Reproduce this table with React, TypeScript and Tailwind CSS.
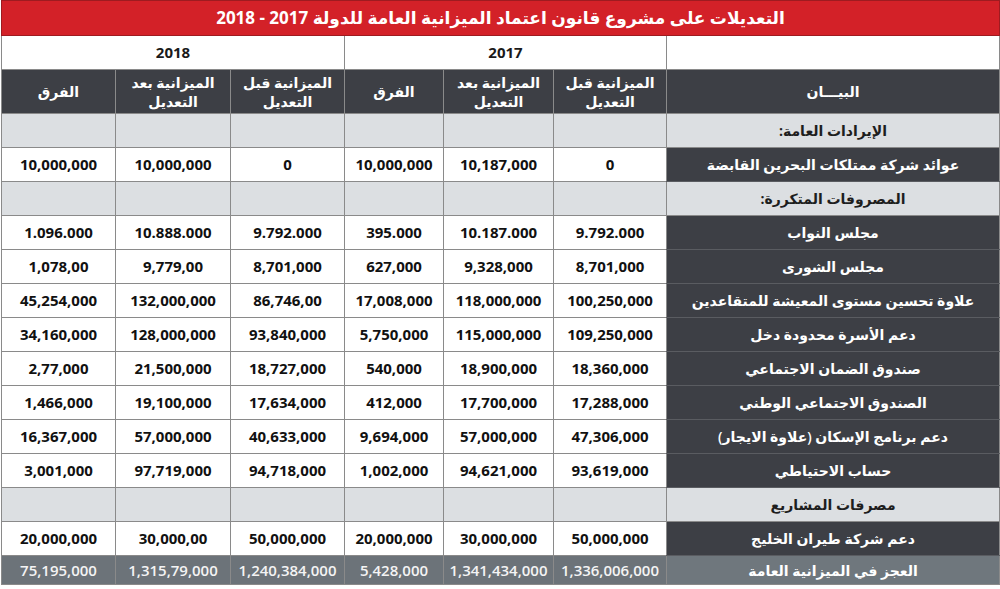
const font = "[font-family:'Open_Sans','DejaVu_Sans',sans-serif]";

type Row =
  | { kind: "section"; label: string }
  | { kind: "data"; label: string; values: string[] }
  | { kind: "total"; label: string; values: string[] };

// values in reading order (right to left): 2017 before, after, diff, 2018 before, after, diff
const rows: Row[] = [
  { kind: "section", label: "الإيرادات العامة:" },
  {
    kind: "data",
    label: "عوائد شركة ممتلكات البحرين القابضة",
    values: ["0", "10,187,000", "10,000,000", "0", "10,000,000", "10,000,000"],
  },
  { kind: "section", label: "المصروفات المتكررة:" },
  {
    kind: "data",
    label: "مجلس النواب",
    values: ["9.792.000", "10.187.000", "395.000", "9.792.000", "10.888.000", "1.096.000"],
  },
  {
    kind: "data",
    label: "مجلس الشورى",
    values: ["8,701,000", "9,328,000", "627,000", "8,701,000", "9,779,00", "1,078,00"],
  },
  {
    kind: "data",
    label: "علاوة تحسين مستوى المعيشة للمتقاعدين",
    values: ["100,250,000", "118,000,000", "17,008,000", "86,746,00", "132,000,000", "45,254,000"],
  },
  {
    kind: "data",
    label: "دعم الأسرة محدودة دخل",
    values: ["109,250,000", "115,000,000", "5,750,000", "93,840,000", "128,000,000", "34,160,000"],
  },
  {
    kind: "data",
    label: "صندوق الضمان الاجتماعي",
    values: ["18,360,000", "18,900,000", "540,000", "18,727,000", "21,500,000", "2,77,000"],
  },
  {
    kind: "data",
    label: "الصندوق الاجتماعي الوطني",
    values: ["17,288,000", "17,700,000", "412,000", "17,634,000", "19,100,000", "1,466,000"],
  },
  {
    kind: "data",
    label: "دعم برنامج الإسكان (علاوة الايجار)",
    values: ["47,306,000", "57,000,000", "9,694,000", "40,633,000", "57,000,000", "16,367,000"],
  },
  {
    kind: "data",
    label: "حساب الاحتياطي",
    values: ["93,619,000", "94,621,000", "1,002,000", "94,718,000", "97,719,000", "3,001,000"],
  },
  { kind: "section", label: "مصرفات المشاريع" },
  {
    kind: "data",
    label: "دعم شركة طيران الخليج",
    values: ["50,000,000", "30,000,000", "20,000,000", "50,000,000", "30,000,00", "20,000,000"],
  },
  {
    kind: "total",
    label: "العجز في الميزانية العامة",
    values: ["1,336,006,000", "1,341,434,000", "5,428,000", "1,240,384,000", "1,315,79,000", "75,195,000"],
  },
];

const subHeads = [
  ["الميزانية قبل", "التعديل"],
  ["الميزانية بعد", "التعديل"],
  ["الفرق"],
  ["الميزانية قبل", "التعديل"],
  ["الميزانية بعد", "التعديل"],
  ["الفرق"],
];

const cell = "border border-[#8a8a8a] text-center align-middle p-0";

export default function App() {
  return (
    <div className={`w-[1000px] h-[589px] bg-white overflow-hidden ${font}`} dir="rtl">
      <table className="w-[998px] table-fixed border-collapse">
        <colgroup>
          <col className="w-[333px]" />
          <col className="w-[113px]" />
          <col className="w-[110px]" />
          <col className="w-[99px]" />
          <col className="w-[114px]" />
          <col className="w-[115px]" />
          <col className="w-[114px]" />
        </colgroup>
        <thead>
          <tr className="h-[35px]">
            <th
              colSpan={7}
              className="bg-[#d32128] border border-[#9e1b20] text-white text-[17px] font-bold text-center"
            >
              التعديلات على مشروع قانون اعتماد الميزانية العامة للدولة 2017 - 2018
            </th>
          </tr>
          <tr className="h-[34px] bg-white">
            <th className={cell}></th>
            <th colSpan={3} className={`${cell} text-[15px] font-bold text-[#1a1a1a]`}>
              2017
            </th>
            <th colSpan={3} className={`${cell} text-[15px] font-bold text-[#1a1a1a]`}>
              2018
            </th>
          </tr>
          <tr className="h-[44px] bg-[#3d3f45]">
            <th className={`${cell} text-white text-[14px] font-bold`}>البيـــان</th>
            {subHeads.map((lines, i) => (
              <th key={i} className={`${cell} text-white text-[14px] font-bold leading-[19px]`}>
                {lines.map((l, j) => (
                  <div key={j}>{l}</div>
                ))}
              </th>
            ))}
          </tr>
        </thead>
        <tbody>
          {rows.map((r, i) => {
            if (r.kind === "section") {
              return (
                <tr key={i} className="h-[34px] bg-[#dcdfe2]">
                  <td className={`${cell} text-[14px] font-bold text-[#1e1e1e]`}>{r.label}</td>
                  {Array.from({ length: 6 }).map((_, j) => (
                    <td key={j} className={cell}></td>
                  ))}
                </tr>
              );
            }
            if (r.kind === "total") {
              return (
                <tr key={i} className="h-[29px] bg-[#6c7379]">
                  <td className={`${cell} bg-[#6f777d] text-[14px] font-semibold text-white`}>{r.label}</td>
                  {r.values.map((v, j) => (
                    <td key={j} className={`${cell} text-[15px] font-semibold text-[#f4f4f4]`} dir="ltr">
                      {v}
                    </td>
                  ))}
                </tr>
              );
            }
            return (
              <tr key={i} className="h-[34px] bg-white">
                <td className={`${cell} bg-[#3d3f45] border-y-[#5a5c61] text-[14px] font-semibold text-white`}>
                  {r.label}
                </td>
                {r.values.map((v, j) => (
                  <td key={j} className={`${cell} text-[15px] font-bold text-[#111]`} dir="ltr">
                    {v}
                  </td>
                ))}
              </tr>
            );
          })}
        </tbody>
      </table>
    </div>
  );
}
